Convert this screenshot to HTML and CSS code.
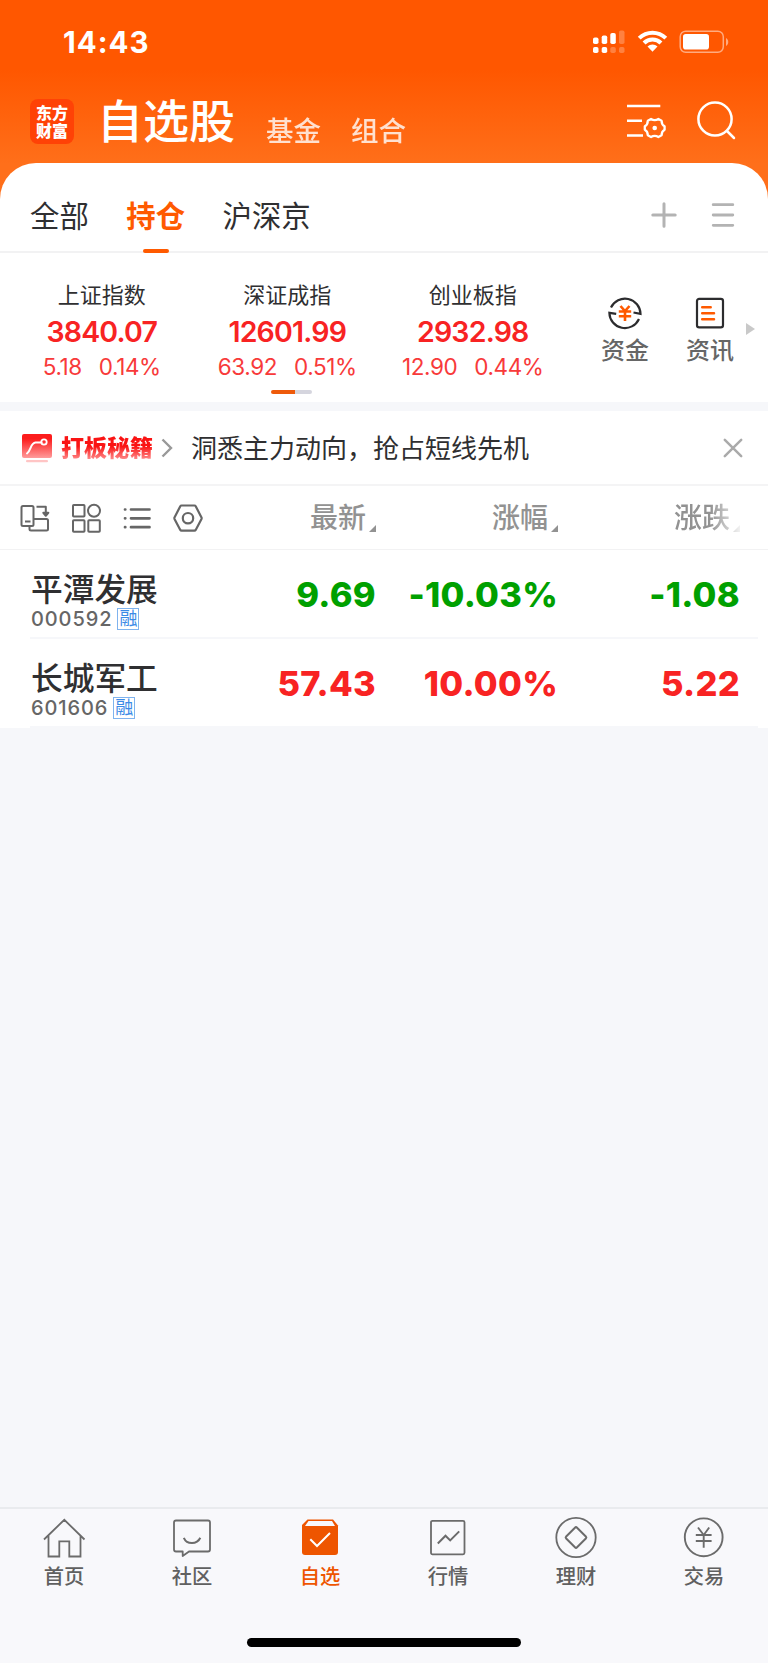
FILE: index.html
```html
<!DOCTYPE html>
<html lang="zh-CN">
<head>
    <meta charset="UTF-8">
    <meta name="viewport" content="width=device-width, initial-scale=1.0">
    <title>自选股</title>
    <link rel="stylesheet" href="styles.css">
</head>
<body>
    <header class="top">
        <div class="status">
            <span class="time">14:43</span>
            <svg class="status-icons" width="140" height="28" viewBox="0 0 140 28" fill="#fff">
                <rect x="1" y="9.500" width="5.500" height="6.500" rx="1.800"/>
                <rect x="9.700" y="7.500" width="5.500" height="8.500" rx="1.800"/>
                <rect x="18.300" y="5" width="5.500" height="11" rx="1.800"/>
                <rect x="27" y="2.500" width="5.500" height="13.500" rx="1.800" opacity=".25"/>
                <rect x="1" y="19" width="5.500" height="6" rx="1.800"/>
                <rect x="9.700" y="19" width="5.500" height="6" rx="1.800"/>
                <rect x="18.300" y="19" width="5.500" height="6" rx="1.800" opacity=".25"/>
                <rect x="27" y="19" width="5.500" height="6" rx="1.800" opacity=".25"/>
                <path d="M45.800 8.700a21 21 0 0 1 29.400 0l-2.800 2.900a17 17 0 0 0-23.800 0z"/>
                <path d="M50.600 13.500a14.300 14.300 0 0 1 19.800 0l-2.900 2.900a10 10 0 0 0-14 0z"/>
                <path d="M55.500 18.500a7.200 7.200 0 0 1 10 0l-5 5.200z"/>
                <rect x="88.200" y="3.200" width="43.100" height="21.100" rx="5.500" fill="none" stroke="#fff" stroke-width="1.500" opacity=".5"/>
                <rect x="91" y="6" width="26" height="15.500" rx="2.800"/>
                <path d="M134 10v8c3-1.500 3-6.500 0-8z" opacity=".5"/>
            </svg>
        </div>
        <div class="title-bar">
            <div class="logo"><span>东方</span><span>财富</span></div>
            <h1>自选股</h1>
            <span class="link">基金</span>
            <span class="link">组合</span>
            <svg class="filter" width="40" height="40" viewBox="0 0 40 40" fill="none" stroke="#fff" stroke-width="2.600">
                <path d="M1 6h33.300M1 20.700h15M1 35.500h16"/>
                <path stroke-width="2.300" stroke-linejoin="round" d="M25 19q3.700 2.400 7.400 0l3.200 1.700q0 4 3 5.600v3.400q-3 1.600-3 5.600l-3.200 1.700q-3.700-2.400-7.400 0l-3.200-1.700q0-4-3-5.600v-3.400q3-1.600 3-5.600z"/>
                <circle cx="28.700" cy="28" r="2.300" fill="#fff" stroke="none"/>
            </svg>
            <svg class="search" width="40" height="40" viewBox="0 0 40 40" fill="none" stroke="#fff" stroke-width="2.500" stroke-linecap="round">
                <circle cx="19" cy="19" r="16.600"/>
                <path d="M31 31l7 7"/>
            </svg>
        </div>
    </header>

    <main class="panel">
        <nav class="groups">
            <span>全部</span>
            <span class="active">持仓</span>
            <span>沪深京</span>
            <svg class="plus" width="26" height="26" viewBox="0 0 26 26" stroke="#b3b3b3" stroke-width="3" stroke-linecap="round">
                <path d="M1.800 13h22.400M13 1.800v22.400"/>
            </svg>
            <svg width="24" height="26" viewBox="0 0 24 26" stroke="#b3b3b3" stroke-width="2.800" stroke-linecap="round">
                <path d="M2.200 2.700h19.600M2.200 13h19.600M2.200 23.300h19.600"/>
            </svg>
        </nav>

        <section class="indexes">
            <div class="index">
                <h3>上证指数</h3>
                <strong>3840.07</strong>
                <p><span>5.18</span><span>0.14%</span></p>
            </div>
            <div class="index">
                <h3>深证成指</h3>
                <strong>12601.99</strong>
                <p><span>63.92</span><span>0.51%</span></p>
            </div>
            <div class="index">
                <h3>创业板指</h3>
                <strong>2932.98</strong>
                <p><span>12.90</span><span>0.44%</span></p>
            </div>
            <div class="shortcut">
                <svg width="36" height="36" viewBox="0 0 36 36" fill="none" stroke="#2c2c2e" stroke-width="2.200">
                    <path d="M4 12.500A15.500 15.500 0 0 1 33.500 18.800l-7-1.300M32 24A15.500 15.500 0 0 1 2.400 17.900l6.800 1"/>
                    <path stroke="#ff5a00" stroke-width="2.600" d="M13.500 11l4.500 5 4.500-5M11.800 16.500h12.400M11.800 21.300h12.400M18 16v10"/>
                </svg>
                <span>资金</span>
            </div>
            <div class="shortcut">
                <svg width="36" height="36" viewBox="0 0 36 36" fill="none" stroke="#2c2c2e" stroke-width="2.200">
                    <rect x="5" y="3.800" width="26" height="28.600" rx="2.200"/>
                    <path stroke="#ff5a00" stroke-width="2.500" stroke-linecap="round" d="M10.200 12.300h8.500M10.200 18.300h11.800M10.200 24.200h11.800"/>
                </svg>
                <span>资讯</span>
            </div>
            <i class="more"></i>
            <i class="pager"></i>
        </section>

        <section class="banner">
            <svg width="30" height="30" viewBox="0 0 30 30" fill="none">
                <defs>
                    <linearGradient id="red" x1="0" y1="0" x2="0" y2="1">
                        <stop offset=".2" stop-color="#fc1c1c"/>
                        <stop offset="1" stop-color="#ff9b9b"/>
                    </linearGradient>
                </defs>
                <rect y="1" width="30" height="24" rx="2" fill="url(#red)"/>
                <path d="M5 20.500c4-3 3.500-10.500 8.500-11h6" stroke="#fff" stroke-width="2" stroke-linecap="round"/>
                <circle cx="22" cy="9" r="2.700" stroke="#fff" stroke-width="1.800"/>
                <rect x="4" y="27" width="22" height="2.300" rx="1.100" fill="#ffc5c5"/>
            </svg>
            <b>打板秘籍</b>
            <svg class="chevron" width="12" height="20" viewBox="0 0 12 20" fill="none" stroke="#999" stroke-width="2.400">
                <path d="M1.500 1.500l8.500 8.500-8.500 8.500"/>
            </svg>
            <p>洞悉主力动向，抢占短线先机</p>
            <svg class="close" width="20" height="20" viewBox="0 0 20 20" stroke="#aaa" stroke-width="2.500" stroke-linecap="round">
                <path d="M1.800 1.800l16.400 16.400M18.200 1.800L1.800 18.200"/>
            </svg>
        </section>

        <section class="columns">
            <div class="tools">
                <svg width="30" height="30" viewBox="0 0 30 30" fill="none" stroke="#666" stroke-width="2" stroke-linejoin="round">
                    <rect x="1.500" y="3" width="12" height="20" rx="1.500"/>
                    <path d="M5 18.500h5.500M16.500 3.800h9.300v8M23.300 9.800l2.500 3 2.500-3zM14 16h12.500q1.500 0 1.500 1.500v8.500q0 1.500-1.500 1.500H11q-1.500 0-1.500-1.500v-3"/>
                </svg>
                <svg width="30" height="30" viewBox="0 0 30 30" fill="none" stroke="#666" stroke-width="2">
                    <rect x="2" y="2" width="11.500" height="11.500" rx=".8"/>
                    <circle cx="23" cy="7.800" r="6"/>
                    <rect x="2" y="17.300" width="11.500" height="11.500" rx=".8"/>
                    <rect x="17.300" y="17.300" width="11.500" height="11.500" rx=".8"/>
                </svg>
                <svg width="30" height="30" viewBox="0 0 30 30" fill="none" stroke="#666" stroke-width="2.700" stroke-linecap="round">
                    <path d="M9 6.500h18.500M9 15.300h18.500M9 24.200h18.500M3 6.500h.3M3 15.300h.3M3 24.200h.3"/>
                </svg>
                <svg width="30" height="30" viewBox="0 0 30 30" fill="none" stroke="#666" stroke-width="2.200" stroke-linejoin="round">
                    <path d="M8.500 2.500h13q.8 0 1.200.7l5.800 11.200q.3.800 0 1.500l-5.800 11q-.4.700-1.200.7h-13q-.8 0-1.200-.7l-5.800-11q-.3-.8 0-1.500l5.800-11.200q.4-.7 1.200-.7z"/>
                    <circle cx="15" cy="15.200" r="5.200"/>
                </svg>
            </div>
            <span class="col">最新</span>
            <span class="col">涨幅</span>
            <span class="col faded">涨跌</span>
        </section>

        <section class="stocks">
            <div class="stock down">
                <div class="name">
                    <h2>平潭发展</h2>
                    <p>000592<em>融</em></p>
                </div>
                <b>9.69</b>
                <b>-10.03%</b>
                <b>-1.08</b>
            </div>
            <div class="stock up">
                <div class="name">
                    <h2>长城军工</h2>
                    <p>601606<em>融</em></p>
                </div>
                <b>57.43</b>
                <b>10.00%</b>
                <b>5.22</b>
            </div>
        </section>
    </main>

    <footer class="tabbar">
        <nav>
            <a>
                <svg width="44" height="44" viewBox="0 0 44 44" fill="none" stroke="#6b6b6b" stroke-width="1.800">
                    <path d="M2 24.500L22.300 4.800l20.200 19.700M6.500 20.500v21h10.800V26.300h10v15.200H38.500v-21"/>
                </svg>
                <span>首页</span>
            </a>
            <a>
                <svg width="44" height="44" viewBox="0 0 44 44" fill="none" stroke="#6b6b6b" stroke-width="1.800" stroke-linejoin="round">
                    <path d="M6 5.500h32q2 0 2 2v27q0 2-2 2H19l-6.300 4.500v-4.500H6q-2 0-2-2v-27q0-2 2-2z"/>
                    <path stroke-width="2" d="M13.800 22.800c3 7 13.200 7 16.500 0"/>
                </svg>
                <span>社区</span>
            </a>
            <a class="active">
                <svg width="44" height="44" viewBox="0 0 44 44" fill="#ee5500">
                    <path d="M9.500 4.500h25.500l5 6V37q0 3-3 3H7q-3 0-3-3V10z"/>
                    <path fill="#f8f8fb" d="M10.500 6h23.500l3 5H7z"/>
                    <path fill="none" stroke="#fff" stroke-width="2" d="M12.300 24.300l6.700 6.700L32 18"/>
                </svg>
                <span>自选</span>
            </a>
            <a>
                <svg width="44" height="44" viewBox="0 0 44 44" fill="none" stroke="#6b6b6b" stroke-width="1.800">
                    <rect x="5" y="5.800" width="33.500" height="33.500" rx="1.500"/>
                    <path stroke-width="2" d="M11.800 28.500l7.700-7.800 4.700 4.700 9-9"/>
                </svg>
                <span>行情</span>
            </a>
            <a>
                <svg width="44" height="44" viewBox="0 0 44 44" fill="none" stroke="#6b6b6b" stroke-width="1.800">
                    <circle cx="22" cy="22.500" r="19.700"/>
                    <rect x="14.300" y="14.800" width="15.400" height="15.400" rx="1.500" transform="rotate(45 22 22.500)" stroke-width="2"/>
                </svg>
                <span>理财</span>
            </a>
            <a>
                <svg width="44" height="44" viewBox="0 0 44 44" fill="none" stroke="#6b6b6b" stroke-width="1.900">
                    <circle cx="21.700" cy="22.300" r="18.900"/>
                    <path d="M16 12.500l5.700 7.500 5.500-7.500M13.800 20h15.800M13.800 26h15.800M21.700 20v12.800"/>
                </svg>
                <span>交易</span>
            </a>
        </nav>
        <div class="home-bar"></div>
    </footer>
</body>
</html>
```
FILE: styles.css
```css
* {
    box-sizing: border-box;
    margin: 0;
    padding: 0;
}

body {
    width: 768px;
    height: 1663px;
    display: flex;
    flex-direction: column;
    overflow: hidden;
    font-family: Inter, "Noto Sans CJK SC", sans-serif;
    background: #f6f7fa;
    color: #2f2f31;
}

svg {
    display: block;
    flex: none;
}

/* header */
.top {
    height: 204px;
    margin-bottom: -41px;
    background: linear-gradient(#ff5700 70px, #ff6f1a 164px);
    color: #fff;
}

.status {
    height: 84px;
    display: flex;
    justify-content: space-between;
    padding: 0 36px 0 63px;
}

.time {
    font-size: 29.5px;
    font-weight: 700;
    line-height: 85px;
    letter-spacing: 1px;
}

.status-icons {
    margin-top: 28px;
}

.title-bar {
    height: 80px;
    display: flex;
    align-items: center;
    padding: 0 32px 0 30px;
}

.logo {
    width: 44px;
    height: 45px;
    margin: -6px 23px 0 0;
    padding-top: 4px;
    border-radius: 8px;
    background: #ff4206;
    font: 900 16px/18.5px "Noto Sans CJK SC", sans-serif;
    text-align: center;
}

.logo span {
    display: block;
}

h1 {
    width: 169px;
    margin-top: -6px;
    font-size: 46px;
    font-weight: 500;
    line-height: 60px;
}

.link {
    width: 85px;
    margin-top: 13px;
    font-size: 27.5px;
    font-weight: 500;
    line-height: 36px;
    opacity: 0.8;
}

.filter {
    margin: -8px 30px 0 auto;
}

.search {
    margin-top: -8px;
}

/* white card */
.panel {
    position: relative;
    height: 565px;
    border-radius: 36px 36px 0 0;
    background: #fff;
}

.groups {
    height: 90px;
    display: flex;
    align-items: center;
    gap: 37.5px;
    padding: 18px 33px 0 30px;
    border-bottom: 2px solid #f2f2f3;
    font-size: 29.4px;
    line-height: 44px;
}

.groups span {
    padding-top: 1px;
}

.groups .active {
    position: relative;
    color: #ff5a00;
    font-weight: 700;
}

.groups .active::after {
    content: "";
    position: absolute;
    left: 16.5px;
    bottom: -14px;
    width: 26px;
    height: 4px;
    border-radius: 2px;
    background: #ff5a00;
}

.groups svg {
    margin-top: -2px;
}

.groups .plus {
    margin-left: auto;
    margin-right: -3px;
}

.indexes {
    position: relative;
    height: 149px;
    display: flex;
    padding: 27px 0 0 9px;
}

.index {
    width: 185.5px;
    text-align: center;
}

.index h3 {
    font-size: 22px;
    font-weight: 400;
    line-height: 30px;
}

.index strong {
    display: block;
    margin-top: 4px;
    color: #f82323;
    font-size: 28.5px;
    font-weight: 600;
    line-height: 36px;
    letter-spacing: -0.8px;
}

.index p {
    display: flex;
    justify-content: center;
    gap: 17px;
    margin-top: 2px;
    color: #f83a3a;
    font-size: 22.5px;
    line-height: 30px;
    letter-spacing: -0.4px;
}

.shortcut {
    width: 85px;
    padding-top: 15px;
    display: flex;
    flex-direction: column;
    align-items: center;
    gap: 3px;
    color: #666;
    font-size: 24px;
    font-weight: 500;
    line-height: 34px;
}

.index + .shortcut {
    margin-left: 17px;
}

.more {
    position: absolute;
    right: 13px;
    top: 70px;
    border: 6px solid transparent;
    border-left: 9px solid #c9c9c9;
    border-right: 0;
}

.pager {
    position: absolute;
    left: 271px;
    top: 137px;
    width: 41px;
    height: 4px;
    border-radius: 2px;
    background: linear-gradient(90deg, #ee5a0a 24px, #d5d5de 24px);
}

.banner {
    height: 84px;
    display: flex;
    align-items: center;
    padding: 0 25px 0 22px;
    border-top: 9px solid #f6f7fa;
    border-bottom: 2px solid #f4f4f5;
}

.banner b {
    margin: 0 8px 0 9px;
    font-size: 23px;
    font-weight: 900;
    line-height: 34px;
    background: linear-gradient(#fa1414 45%, #ff8f8f 85%);
    -webkit-background-clip: text;
    background-clip: text;
    color: transparent;
}

.banner p {
    margin: 3px 0 0 18px;
    font-size: 26px;
    line-height: 38px;
}

.banner .close {
    margin: 1px 0 0 auto;
}

.columns {
    height: 64px;
    display: flex;
    align-items: center;
    border-bottom: 1px solid #f2f2f3;
}

.tools {
    width: 194px;
    display: flex;
    gap: 21px;
    padding-left: 20px;
}

.col {
    width: 182px;
    display: flex;
    justify-content: flex-end;
    align-items: flex-end;
    gap: 3px;
    color: #929292;
    font-size: 28px;
    font-weight: 500;
    line-height: 38px;
}

.col::after {
    content: "";
    margin-bottom: 5px;
    border-left: 7px solid transparent;
    border-bottom: 7px solid #929292;
}

.col.faded {
    -webkit-mask-image: linear-gradient(90deg, #000 152px, transparent 186px);
    mask-image: linear-gradient(90deg, #000 152px, transparent 186px);
}

/* stock list */
.stock {
    height: 89px;
    display: flex;
    margin: 0 10px 0 30px;
    border-bottom: 2px solid #f6f7fa;
}

.name {
    width: 164px;
    padding: 18px 0 0 1px;
}

h2 {
    font-size: 31.7px;
    font-weight: 500;
    line-height: 44px;
    white-space: nowrap;
}

.name p {
    display: flex;
    align-items: center;
    gap: 5px;
    height: 22px;
    margin-top: -4px;
    color: #666;
    font-size: 20px;
    font-weight: 500;
    letter-spacing: 0.9px;
}

.name em {
    width: 22px;
    height: 22px;
    border: 1.5px solid #7fb3ee;
    color: #3b8ae6;
    font-size: 18px;
    font-style: normal;
    font-weight: 400;
    letter-spacing: 0;
    line-height: 19px;
    text-align: center;
}

.stock b {
    width: 182px;
    font-size: 34.5px;
    font-weight: 800;
    line-height: 90px;
    letter-spacing: 0.3px;
    text-align: right;
}

.down b {
    color: #00a000;
}

.up b {
    color: #f82323;
}

/* bottom tabs */
.tabbar {
    height: 156px;
    margin-top: auto;
    border-top: 2px solid #e9ebee;
    background: #f8f8fb;
}

.tabbar nav {
    display: flex;
    padding-top: 6px;
}

.tabbar a {
    flex: 1;
    display: flex;
    flex-direction: column;
    align-items: center;
    gap: 4px;
    color: #606060;
    font-size: 20.3px;
    font-weight: 500;
    line-height: 28px;
}

.tabbar .active {
    color: #ee5500;
}

.home-bar {
    width: 274px;
    height: 9px;
    margin: 47px auto 0;
    border-radius: 5px;
    background: #000;
}
```
